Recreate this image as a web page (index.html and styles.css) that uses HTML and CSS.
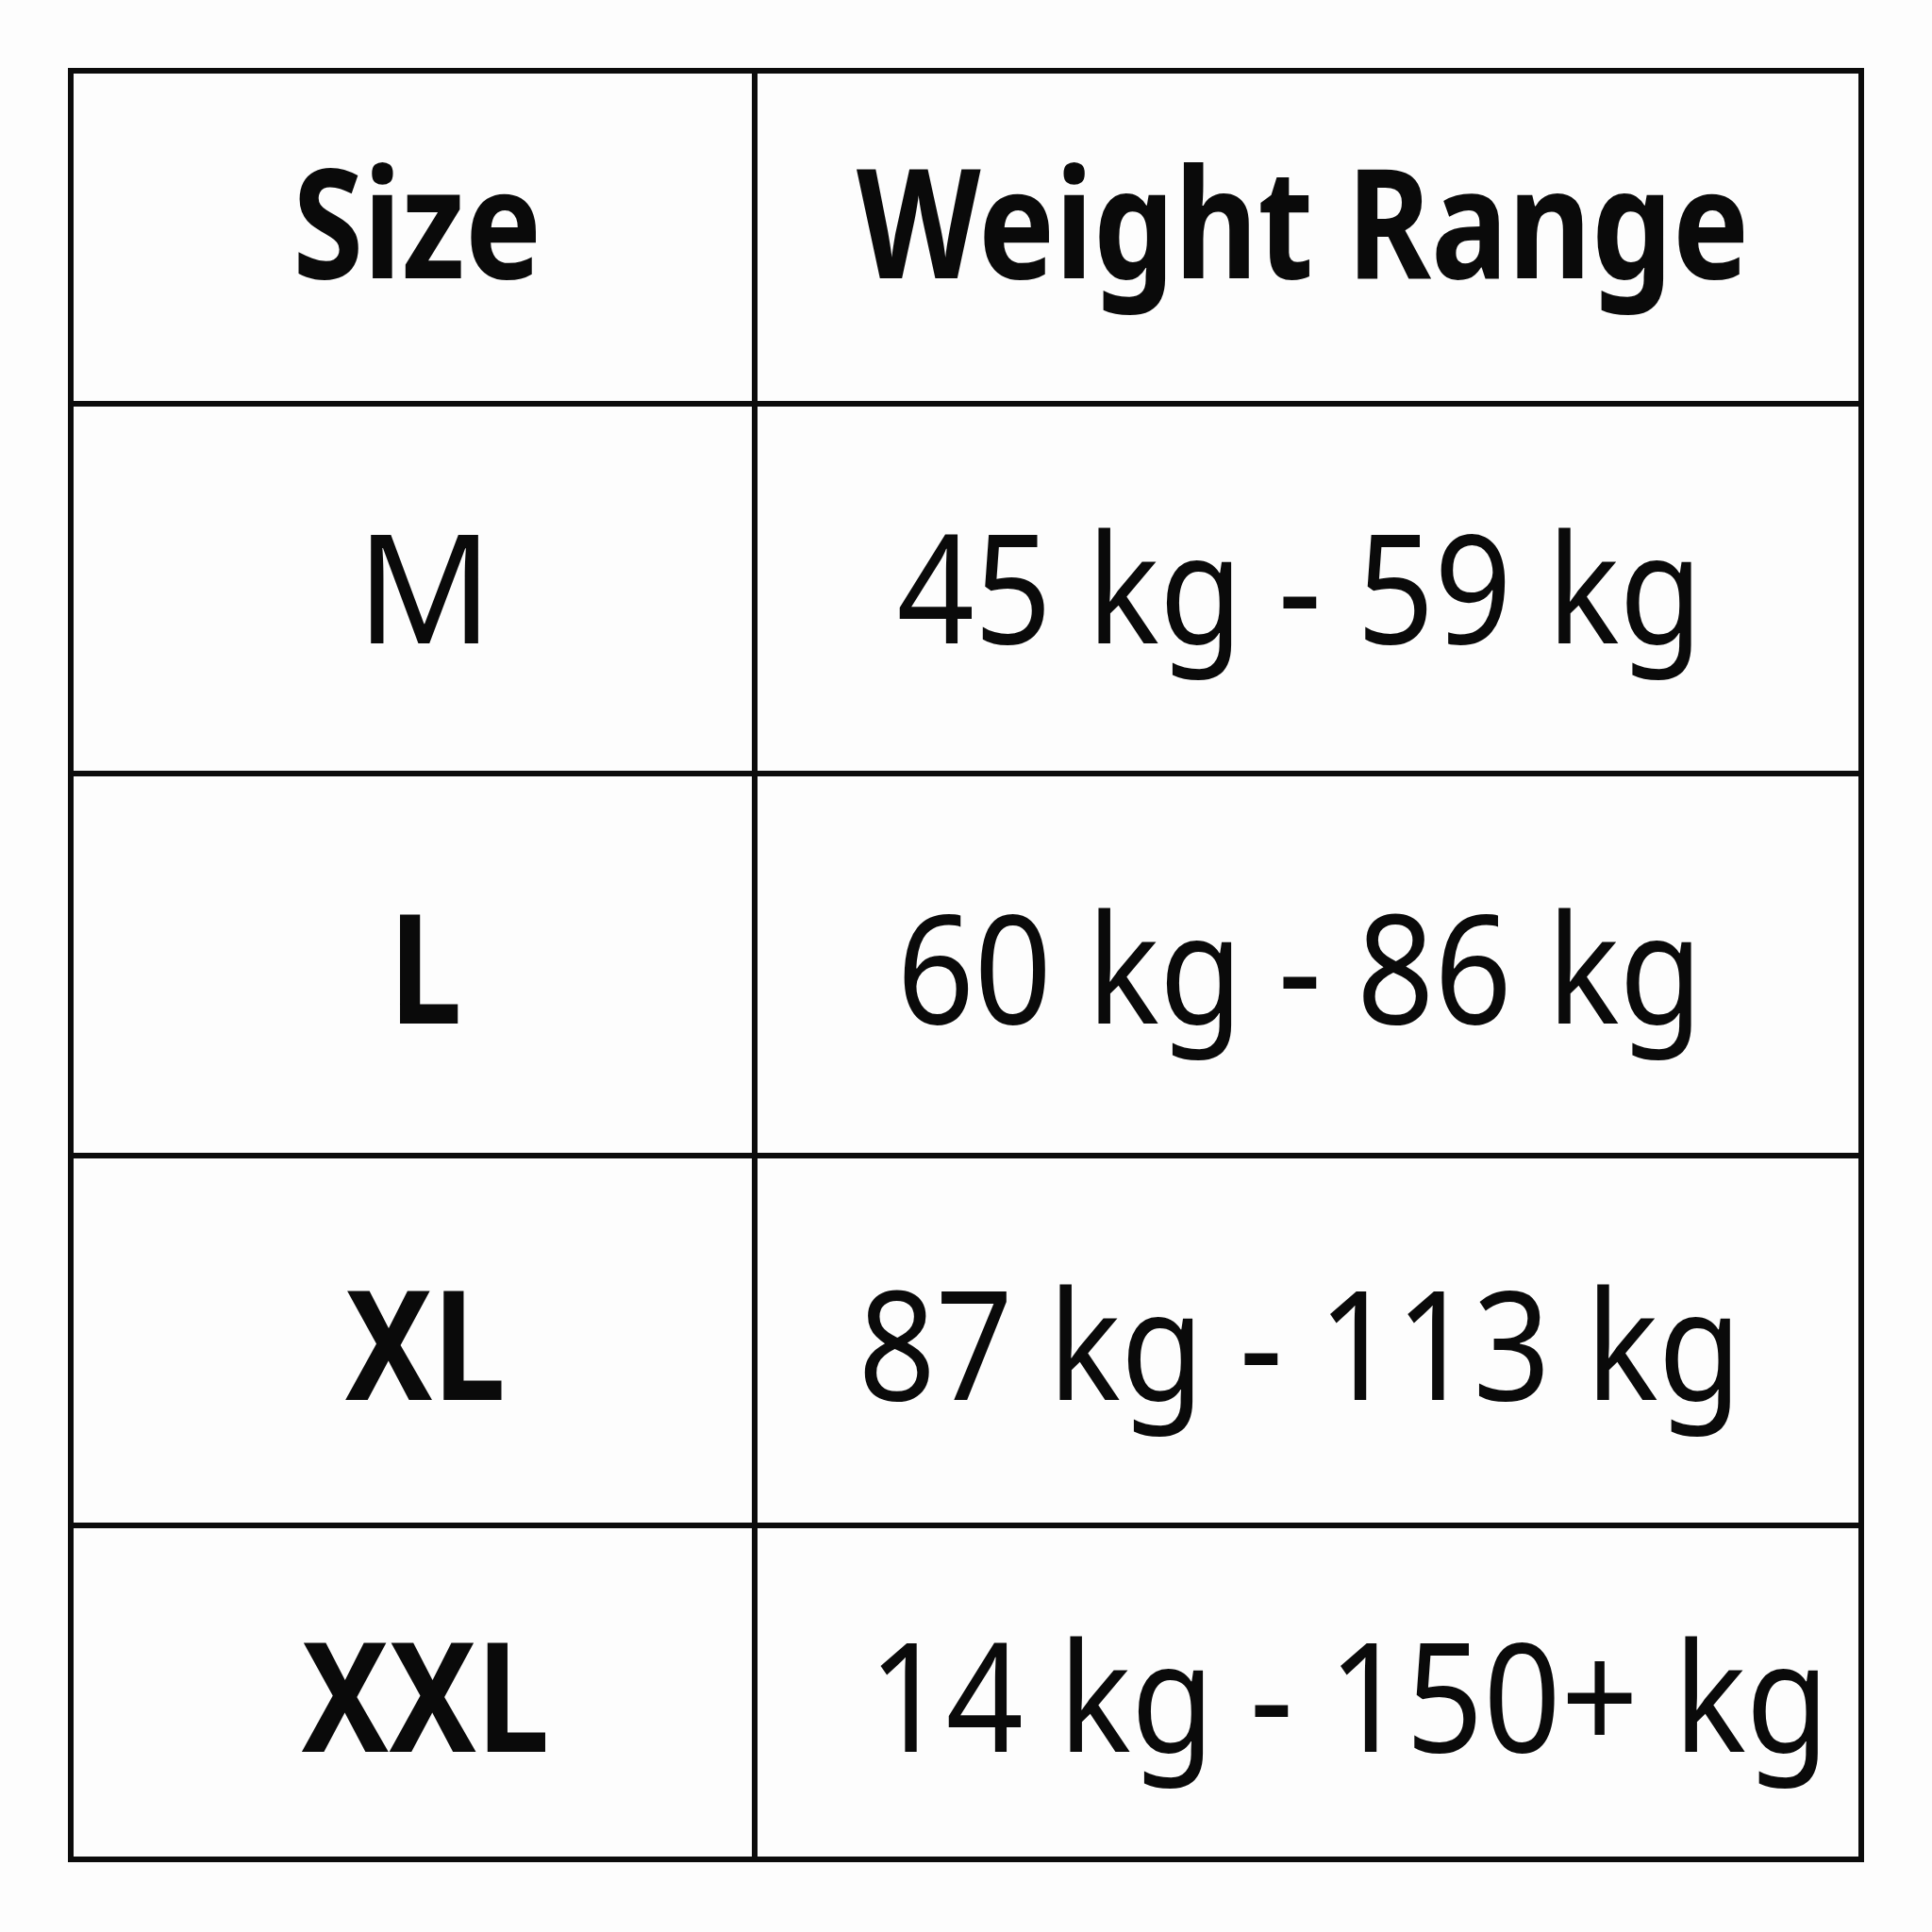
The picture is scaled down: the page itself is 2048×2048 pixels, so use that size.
FILE: index.html
```html
<!DOCTYPE html>
<html lang="en">
<head>
<meta charset="utf-8">
<title>Size Chart</title>
<link rel="stylesheet" href="styles.css">
</head>
<body>
<div class="page">
  <div class="chart">
    <div class="cell head head-size"><span class="txt">Size</span></div>
    <div class="cell head head-range"><span class="txt">Weight Range</span></div>

    <div class="cell label regular row-m"><span class="txt">M</span></div>
    <div class="cell value row-m"><span class="txt">45 kg - 59 kg</span></div>

    <div class="cell label"><span class="txt">L</span></div>
    <div class="cell value"><span class="txt">60 kg - 86 kg</span></div>

    <div class="cell label"><span class="txt">XL</span></div>
    <div class="cell value"><span class="txt">87 kg - 113 kg</span></div>

    <div class="cell label"><span class="txt">XXL</span></div>
    <div class="cell value shifted"><span class="txt">14 kg - 150+ kg</span></div>
  </div>
</div>
</body>
</html>
```

FILE: styles.css
```css
html, body {
  margin: 0;
  padding: 0;
  background: #fdfdfd;
}

.page {
  padding: 72px 0 0 72px;
}

.chart {
  width: 1904px;
  box-sizing: border-box;
  background: #0c0c0c;
  padding: 6px;
  display: grid;
  grid-template-columns: 719px 1167px;
  grid-template-rows: 347px 386px 399px 386px 348px;
  gap: 6px;
}

.cell {
  min-width: 0;
  background: #fdfdfd;
  display: flex;
  align-items: center;
  justify-content: center;
  color: #0a0a0a;
  font-family: "Noto Sans", "Open Sans", sans-serif;
  line-height: 1;
  white-space: nowrap;
  box-sizing: border-box;
}

.txt {
  display: inline-block;
  flex: none;
  transform-origin: center center;
}

.head {
  font-weight: 700;
  font-size: 162px;
  padding-bottom: 40px;
}

.head .txt {
  transform: scaleX(0.84);
}

.head-size {
  padding-left: 10px;
}

.head-range {
  padding-right: 10px;
}

.label {
  font-weight: 700;
  font-size: 161px;
  padding-left: 26px;
}

.label .txt {
  transform: scaleX(0.86);
}

.label.regular {
  font-weight: 400;
}

.label.regular .txt {
  transform: scaleX(0.99);
}

.row-m {
  padding-bottom: 10px;
}

.value {
  font-weight: 400;
  font-size: 161px;
  padding-right: 18px;
}

.value .txt {
  transform: scaleX(0.892);
}

.value.shifted {
  padding-left: 86px;
  padding-right: 0;
}
```
